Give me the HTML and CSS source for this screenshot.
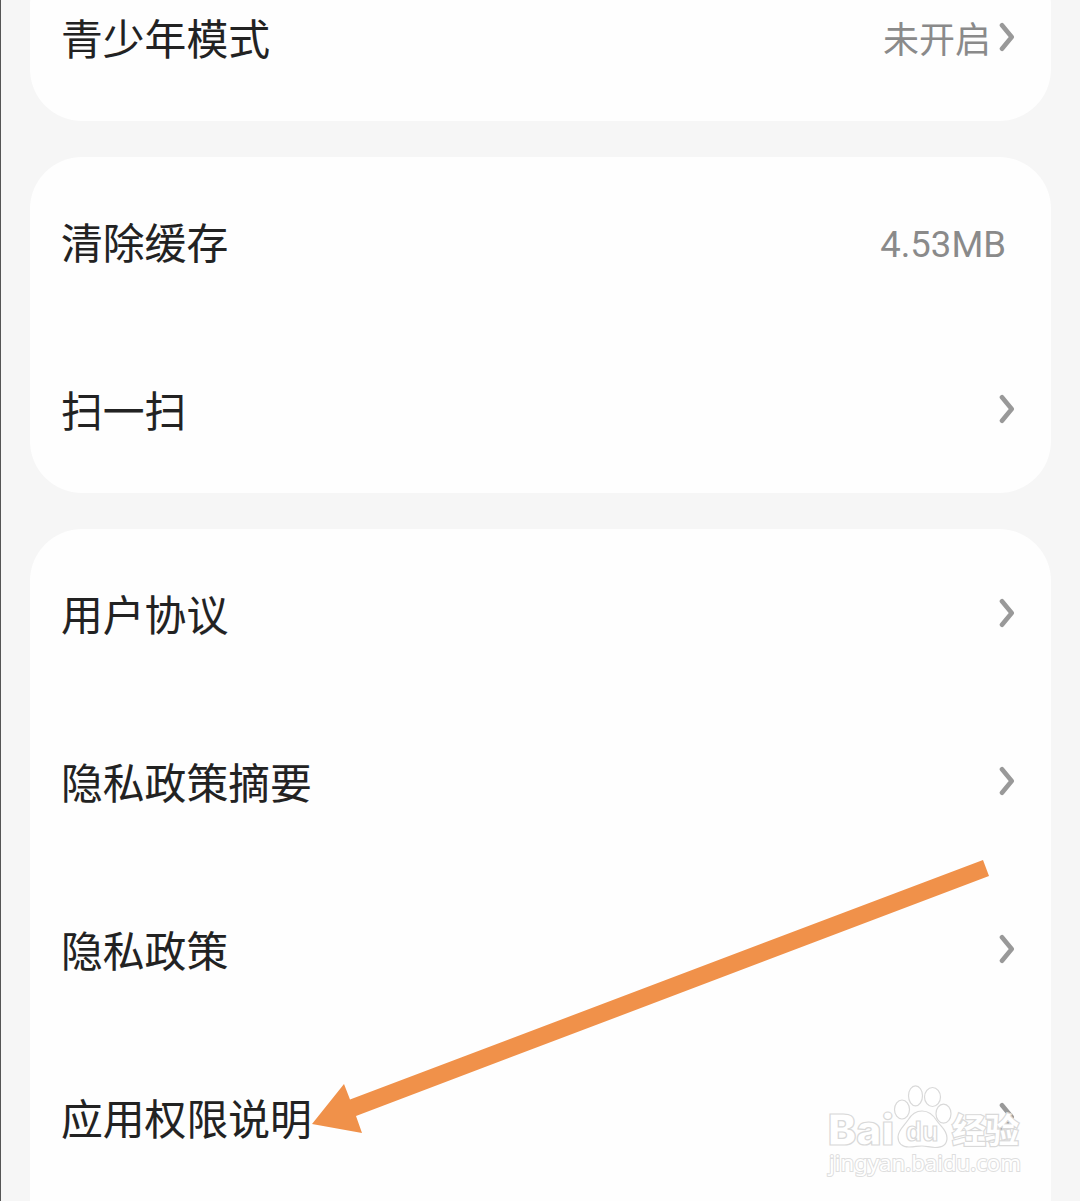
FILE: index.html
```html
<!DOCTYPE html>
<html lang="zh-CN">
<head>
    <meta charset="UTF-8">
    <meta name="viewport" content="width=device-width, initial-scale=1.0">
    <title>设置</title>
    <link rel="stylesheet" href="styles.css">
</head>
<body>
    <svg width="0" height="0" class="defs">
        <symbol id="chevron" viewBox="0 0 16 30">
            <path d="M3 3.3 L12.7 15 L3 26.7"/>
        </symbol>
    </svg>

    <div class="settings">
        <div class="card">
            <div class="row">
                <span class="label">青少年模式</span>
                <span class="value">未开启</span>
                <svg class="chevron"><use href="#chevron"/></svg>
            </div>
        </div>

        <div class="card">
            <div class="row">
                <span class="label">清除缓存</span>
                <span class="value size">4.53MB</span>
            </div>
            <div class="row">
                <span class="label">扫一扫</span>
                <svg class="chevron"><use href="#chevron"/></svg>
            </div>
        </div>

        <div class="card">
            <div class="row">
                <span class="label">用户协议</span>
                <svg class="chevron"><use href="#chevron"/></svg>
            </div>
            <div class="row">
                <span class="label">隐私政策摘要</span>
                <svg class="chevron"><use href="#chevron"/></svg>
            </div>
            <div class="row">
                <span class="label">隐私政策</span>
                <svg class="chevron"><use href="#chevron"/></svg>
            </div>
            <div class="row">
                <span class="label">应用权限说明</span>
                <svg class="chevron"><use href="#chevron"/></svg>
            </div>
        </div>
    </div>

    <!-- arrow pointing at the last row -->
    <svg class="arrow" viewBox="0 0 680 276">
        <polygon points="2,266 34,226 40,241.5 673,2 679,18 46,258 52,275"/>
    </svg>

    <!-- watermark -->
    <svg class="watermark" viewBox="0 0 210 100">
        <g class="paw">
            <ellipse cx="82" cy="29.5" rx="7.5" ry="9.5"/>
            <ellipse cx="95.5" cy="15.8" rx="7" ry="10"/>
            <ellipse cx="112.5" cy="17" rx="8" ry="9.5"/>
            <ellipse cx="123.5" cy="33.7" rx="7.5" ry="9.5"/>
            <path d="M102 31 C109 31 114 36 117 41 C121 47 127 50 127 58 C127 65 122 67.5 115 67.5 C109 67.5 107 66 102 66 C97 66 95 67 89 67 C82 67 78 63 78 57 C78 50 84 46 88 40 C91 35 95 31 102 31 Z"/>
        </g>
        <text class="brand" x="8" y="65" textLength="66" lengthAdjust="spacingAndGlyphs">Bai</text>
        <text class="du" x="85.5" y="61" textLength="33" lengthAdjust="spacingAndGlyphs">du</text>
        <text class="cn" x="132" y="62.5" textLength="67">经验</text>
        <text class="url" x="9" y="91" textLength="192" lengthAdjust="spacingAndGlyphs">jingyan.baidu.com</text>
    </svg>
</body>
</html>
```

FILE: styles.css
```css
body {
    margin: 0;
    height: 1201px;
    position: relative;
    overflow: hidden;
    background-color: #f6f6f6;
    font-family: "Noto Sans CJK SC", sans-serif;
    color: #222;
}

.defs {
    position: absolute;
}

.settings {
    box-sizing: border-box;
    height: 1201px;
    overflow: hidden;
    padding: 0 29px;
    border-left: 1px solid #555;
    display: flex;
    flex-direction: column;
    gap: 36px;
}

.card {
    flex-shrink: 0;
    padding: 0 36px 0 31px;
    background-color: #fefefe;
    border-radius: 52px;
}

.card:first-child {
    margin-top: -47px;
}

.card:last-child {
    padding-bottom: 60px;
}

.row {
    display: flex;
    align-items: center;
    height: 168px;
}

.label {
    flex: 1;
    font-size: 41.8px;
    line-height: 62px;
    -webkit-text-stroke: 0.1px #222;
}

.value {
    font-size: 36px;
    line-height: 54px;
    margin-right: 8px;
    color: #8a8a8a;
}

.size {
    font-family: Roboto, sans-serif;
    font-size: 36.5px;
    padding-top: 8px;
    margin-right: 9px;
}

.chevron {
    width: 16px;
    height: 30px;
    fill: none;
    stroke: #999;
    stroke-width: 4.6;
    stroke-linecap: round;
    stroke-linejoin: round;
}

.arrow {
    position: absolute;
    left: 310px;
    top: 858px;
    width: 680px;
    height: 276px;
    fill: #f0914a;
}

.watermark {
    position: absolute;
    left: 820px;
    top: 1080px;
    width: 210px;
    height: 100px;
    fill: #fff;
    stroke: #d9d9d9;
    stroke-width: 1.2;
}

.brand {
    font: 900 42px Inter, sans-serif;
}

.du {
    font: bold 28px "Liberation Sans", sans-serif;
}

.cn {
    font: bold 34px "Noto Sans CJK SC", sans-serif;
    paint-order: stroke;
    stroke-width: 2.4;
}

.url {
    font: 22px "Noto Sans", sans-serif;
    paint-order: stroke;
    stroke: #dedede;
    stroke-width: 2;
}
```
